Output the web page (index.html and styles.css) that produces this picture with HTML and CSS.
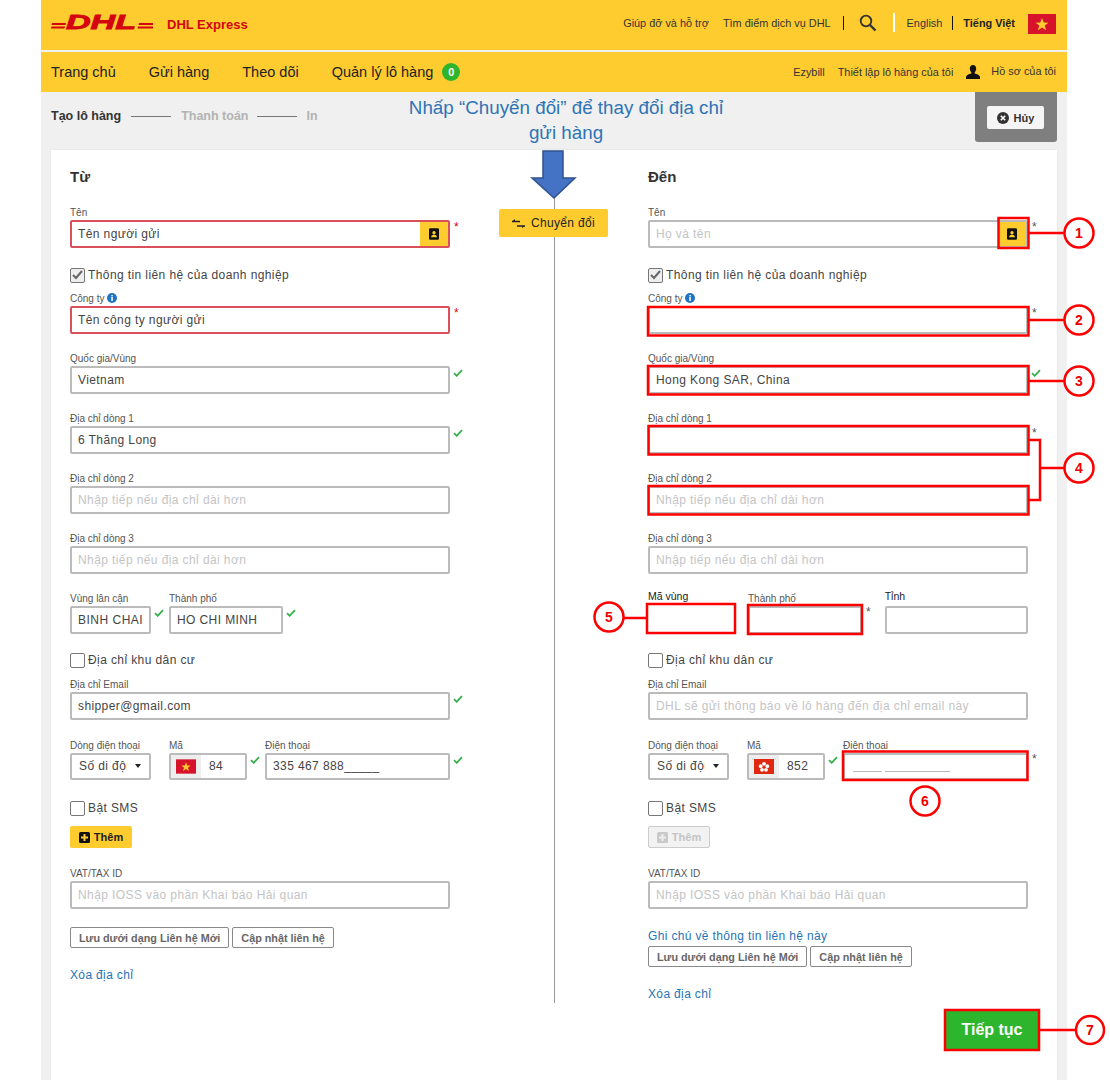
FILE: index.html
```html
<!DOCTYPE html>
<html lang="vi">
<head>
<meta charset="utf-8">
<title>DHL Express</title>
<link rel="stylesheet" href="styles.css">
</head>
<body>
<svg width="0" height="0" class="defs">
  <symbol id="vn" viewBox="0 0 28 20"><rect width="28" height="20" fill="#d6132a"/><polygon points="14,4 15.7,8.6 20.5,8.7 16.7,11.6 18.1,16.2 14,13.5 9.9,16.2 11.3,11.6 7.5,8.7 12.3,8.6" fill="#ffcc2f"/></symbol>
  <symbol id="book" viewBox="0 0 12 14"><path d="M1.5 0h9A1.5 1.5 0 0 1 12 1.5v11a1.5 1.5 0 0 1-1.500 1.500h-9A1.500 1.500 0 0 1 0 12.500v-11A1.500 1.500 0 0 1 1.500 0z" fill="#111"/><circle cx="6" cy="5.500" r="2" fill="#ffcc2f"/><path d="M2.500 11c0-2 1.500-3 3.500-3s3.500 1 3.500 3z" fill="#ffcc2f"/></symbol>
  <symbol id="check" viewBox="0 0 10 8"><path d="M1 4.200 3.700 6.800 9 1.200" fill="none" stroke="#35b04a" stroke-width="1.800"/></symbol>
</svg>
<div class="page">
  <header class="top">
    <div class="brand">
      <svg class="logo" width="102" height="18" viewBox="0 0 102 18">
        <g fill="#d40511">
          <polygon points="1,10 15,10 14.500,12 0.500,12"/><polygon points="0.500,13.500 14,13.500 13.500,15.500 0,15.500"/>
          <polygon points="88,10 102,10 102,12 87.500,12"/><polygon points="87,13.500 102,13.500 102,15.500 86.500,15.500"/>
        </g>
        <text x="15" y="16" class="logo-text" textLength="70" lengthAdjust="spacingAndGlyphs">DHL</text>
      </svg>
      <span class="product">DHL Express</span>
    </div>
    <nav class="util">
      <a class="util-gap">Giúp đỡ và hỗ trợ</a>
      <a>Tìm điểm dịch vụ DHL</a>
      <span class="pipe"></span>
      <svg class="search" width="18" height="18" viewBox="0 0 18 18"><circle cx="7" cy="7" r="5.300" fill="none" stroke="#333" stroke-width="1.800"/><path d="M11 11l5.500 5.500" stroke="#333" stroke-width="2.400"/></svg>
      <span class="white-bar"></span>
      <a>English</a>
      <span class="pipe pipe-lang"></span>
      <b>Tiếng Việt</b>
      <svg class="flag-top"><use href="#vn"/></svg>
    </nav>
  </header>
  <nav class="main-nav">
    <a class="nav-home">Trang chủ</a>
    <a class="nav-send">Gửi hàng</a>
    <a class="nav-track">Theo dõi</a>
    <a>Quản lý lô hàng</a>
    <span class="badge">0</span>
    <span class="nav-right">
      <a>Ezybill</a>
      <a>Thiết lập lô hàng của tôi</a>
      <svg class="user" width="14" height="14" viewBox="0 0 14 14"><path d="M7 0c2 0 3.200 1.500 3.200 3.600 0 1.500-.6 2.900-1.500 3.700v1.200c2 .6 5.300 1.300 5.300 4V14H0v-1.500c0-2.700 3.300-3.400 5.300-4V7.300C4.400 6.500 3.800 5.100 3.800 3.600 3.800 1.500 5 0 7 0z" fill="#111"/></svg>
      <a class="profile">Hồ sơ của tôi</a>
    </span>
  </nav>
  <div class="steps">
    <b class="step-on">Tạo lô hàng</b><i class="step-line"></i><b class="step-off">Thanh toán</b><i class="step-line"></i><b class="step-off">In</b>
    <div class="cancel-tab">
      <button class="cancel"><svg width="12" height="12" viewBox="0 0 12 12"><circle cx="6" cy="6" r="6" fill="#333"/><path d="M3.800 3.800l4.400 4.400M8.200 3.800 3.800 8.200" stroke="#fff" stroke-width="1.600"/></svg>Hủy</button>
    </div>
  </div>
  <main class="card">
    <section class="col">
      <h2>Từ</h2>
      <div class="field f-gap19"><label>Tên</label><div class="line">
        <div class="input err addon-wrap"><span>Tên người gửi</span><span class="addon"><svg width="10" height="12"><use href="#book"/></svg></span></div><em class="req red">*</em></div></div>
      <div class="tick f-gap9"><span class="box on"><svg width="11" height="10" viewBox="0 0 11 10"><path d="M1 5l3 3 6-7" fill="none" stroke="#666" stroke-width="2"/></svg></span>Thông tin liên hệ của doanh nghiệp</div>
      <div class="field"><label>Công ty <svg class="info" width="10" height="10" viewBox="0 0 10 10"><circle cx="5" cy="5" r="5" fill="#1f73c4"/><rect x="4.300" y="4" width="1.500" height="4" fill="#fff"/><rect x="4.300" y="2" width="1.500" height="1.400" fill="#fff"/></svg></label><div class="line">
        <div class="input err">Tên công ty người gửi</div><em class="req red">*</em></div></div>
      <div class="field"><label>Quốc gia/Vùng</label><div class="line"><div class="input">Vietnam</div><svg class="ok"><use href="#check"/></svg></div></div>
      <div class="field"><label>Địa chỉ dòng 1</label><div class="line"><div class="input">6 Thăng Long</div><svg class="ok"><use href="#check"/></svg></div></div>
      <div class="field"><label>Địa chỉ dòng 2</label><div class="line"><div class="input ph">Nhập tiếp nếu địa chỉ dài hơn</div></div></div>
      <div class="field"><label>Địa chỉ dòng 3</label><div class="line"><div class="input ph">Nhập tiếp nếu địa chỉ dài hơn</div></div></div>
      <div class="field row">
        <div class="cell w81"><label>Vùng lân cận</label><div class="input clip">BINH CHAI</div></div><svg class="ok cell-ok"><use href="#check"/></svg>
        <div class="cell w114"><label>Thành phố</label><div class="input">HO CHI MINH</div></div><svg class="ok cell-ok"><use href="#check"/></svg>
      </div>
      <div class="tick f-gap10"><span class="box"></span>Địa chỉ khu dân cư</div>
      <div class="field f-gap19"><label>Địa chỉ Email</label><div class="line"><div class="input">shipper@gmail.com</div><svg class="ok"><use href="#check"/></svg></div></div>
      <div class="field phone-row row">
        <div class="cell w81"><label>Dòng điện thoại</label><div class="input select"><span class="sel-text">Số di động</span><i class="caret"></i></div></div>
        <div class="cell w78 m18"><label>Mã</label><div class="input code"><span class="code-flag"><svg width="20" height="15"><use href="#vn"/></svg></span><span class="code-num">84</span></div></div><svg class="ok cell-ok"><use href="#check"/></svg>
        <div class="cell w185"><label>Điện thoại</label><div class="input">335 467 888_____</div></div><svg class="ok cell-ok"><use href="#check"/></svg>
      </div>
      <div class="tick f-gap10"><span class="box"></span>Bật SMS</div>
      <button class="add"><svg width="11" height="11" viewBox="0 0 11 11"><rect width="11" height="11" rx="1.500" fill="#111"/><path d="M5.500 2v7M2 5.500h7" stroke="#ffcc2f" stroke-width="2"/></svg>Thêm</button>
      <div class="field vat"><label>VAT/TAX ID</label><div class="line"><div class="input ph">Nhập IOSS vào phần Khai báo Hải quan</div></div></div>
      <div class="btns"><button class="ghost">Lưu dưới dạng Liên hệ Mới</button><button class="ghost">Cập nhật liên hệ</button></div>
      <a class="link del">Xóa địa chỉ</a>
    </section>

    <div class="mid">
      <i class="mid-line short"></i>
      <button class="swap"><svg width="13" height="9" viewBox="0 0 13 9"><path d="M0 2.500h8M5 7h8" stroke="#222" stroke-width="1.600"/><path d="M0 2.500 3 0v2.500zM13 7l-3 2V7z" fill="#222"/></svg>Chuyển đổi</button>
      <i class="mid-line long"></i>
    </div>

    <section class="col col-r">
      <h2>Đến</h2>
      <div class="field f-gap19"><label>Tên</label><div class="line">
        <div class="input addon-wrap ph"><span>Họ và tên</span><span class="addon"><svg width="10" height="12"><use href="#book"/></svg></span></div><em class="req">*</em></div></div>
      <div class="tick f-gap9"><span class="box on"><svg width="11" height="10" viewBox="0 0 11 10"><path d="M1 5l3 3 6-7" fill="none" stroke="#666" stroke-width="2"/></svg></span>Thông tin liên hệ của doanh nghiệp</div>
      <div class="field"><label>Công ty <svg class="info" width="10" height="10" viewBox="0 0 10 10"><circle cx="5" cy="5" r="5" fill="#1f73c4"/><rect x="4.300" y="4" width="1.500" height="4" fill="#fff"/><rect x="4.300" y="2" width="1.500" height="1.400" fill="#fff"/></svg></label><div class="line"><div class="input"></div><em class="req">*</em></div></div>
      <div class="field"><label>Quốc gia/Vùng</label><div class="line"><div class="input">Hong Kong SAR, China</div><svg class="ok"><use href="#check"/></svg></div></div>
      <div class="field"><label>Địa chỉ dòng 1</label><div class="line"><div class="input"></div><em class="req">*</em></div></div>
      <div class="field"><label>Địa chỉ dòng 2</label><div class="line"><div class="input ph">Nhập tiếp nếu địa chỉ dài hơn</div></div></div>
      <div class="field"><label>Địa chỉ dòng 3</label><div class="line"><div class="input ph">Nhập tiếp nếu địa chỉ dài hơn</div></div></div>
      <div class="field row">
        <div class="cell w88"><label class="dark">Mã vùng</label><div class="input blank"></div></div>
        <div class="cell w114 m12"><label>Thành phố</label><div class="input"></div></div><em class="req cell-req">*</em>
        <div class="cell w143 m-tinh"><label class="dark">Tỉnh</label><div class="input"></div></div>
      </div>
      <div class="tick f-gap10"><span class="box"></span>Địa chỉ khu dân cư</div>
      <div class="field f-gap19"><label>Địa chỉ Email</label><div class="line"><div class="input ph">DHL sẽ gửi thông báo về lô hàng đến địa chỉ email này</div></div></div>
      <div class="field phone-row row">
        <div class="cell w81"><label>Dòng điện thoại</label><div class="input select"><span class="sel-text">Số di động</span><i class="caret"></i></div></div>
        <div class="cell w78 m18"><label>Mã</label><div class="input code"><span class="code-flag"><svg width="20" height="15" viewBox="0 0 20 15"><rect width="20" height="15" fill="#de2910"/><g fill="#fff"><circle cx="10" cy="4.800" r="1.900"/><circle cx="13.300" cy="7.200" r="1.900"/><circle cx="12" cy="10.800" r="1.900"/><circle cx="8" cy="10.800" r="1.900"/><circle cx="6.700" cy="7.200" r="1.900"/></g></svg></span><span class="code-num">852</span></div></div><svg class="ok cell-ok"><use href="#check"/></svg>
        <div class="cell w185"><label>Điện thoại</label><div class="input mask"><i class="m1"></i><i class="m2"></i></div></div><em class="req cell-req">*</em>
      </div>
      <div class="tick f-gap10"><span class="box"></span>Bật SMS</div>
      <button class="add off"><svg width="11" height="11" viewBox="0 0 11 11"><rect width="11" height="11" rx="1.500" fill="#c9c9c9"/><path d="M5.500 2v7M2 5.500h7" stroke="#eee" stroke-width="2"/></svg>Thêm</button>
      <div class="field vat"><label>VAT/TAX ID</label><div class="line"><div class="input ph">Nhập IOSS vào phần Khai báo Hải quan</div></div></div>
      <a class="link note">Ghi chú về thông tin liên hệ này</a>
      <div class="btns"><button class="ghost">Lưu dưới dạng Liên hệ Mới</button><button class="ghost">Cập nhật liên hệ</button></div>
      <a class="link del">Xóa địa chỉ</a>
    </section>
    <button class="next">Tiếp tục</button>
  </main>

  <p class="hint">Nhấp “Chuyển đổi” để thay đổi địa chỉ<br>gửi hàng</p>
</div>

<svg class="marks" width="1110" height="1080" viewBox="0 0 1110 1080">
  <polygon points="543,151 563,151 563,178 575,178 554,198 532,178 543,178" fill="#4472c4" stroke="#2f528f" stroke-width="1.500"/>
  <g fill="none" stroke="#f00" stroke-width="2.500">
    <rect x="998.500" y="218" width="30" height="30"/>
    <rect x="648" y="307" width="380.500" height="28.500"/>
    <rect x="648" y="366" width="380.500" height="28.500"/>
    <rect x="648.500" y="426" width="380" height="28.500"/>
    <rect x="648.500" y="486" width="380" height="28.500"/>
    <rect x="647" y="604" width="88" height="29"/>
    <rect x="748" y="605" width="114" height="29"/>
    <rect x="843" y="751.500" width="184.500" height="28.500"/>
    <rect x="945" y="1010" width="94" height="40"/>
    <path d="M1029 233h35M1029 320h35M1029 381h35M1029 440h11v60h-11M1040 468h24M623 618h25M1040 1030h36"/>
    <circle cx="1079" cy="233" r="14.500" fill="#fff"/>
    <circle cx="1079" cy="320" r="14.500" fill="#fff"/>
    <circle cx="1079" cy="381" r="14.500" fill="#fff"/>
    <circle cx="1079" cy="468" r="14.500" fill="#fff"/>
    <circle cx="609" cy="617" r="14.500" fill="#fff"/>
    <circle cx="925" cy="801" r="14.500" fill="#fff"/>
    <circle cx="1090" cy="1030" r="14" fill="#fff"/>
  </g>
  <g class="num">
    <text x="1079" y="238">1</text><text x="1079" y="325">2</text><text x="1079" y="386">3</text><text x="1079" y="473">4</text>
    <text x="609" y="622">5</text><text x="925" y="806">6</text><text x="1090" y="1035">7</text>
  </g>
</svg>
</body>
</html>
```

FILE: styles.css
```css
* { box-sizing: border-box; }
html, body { margin: 0; height: 1080px; overflow: hidden; background: #fff; }
body { position: relative; font-family: "Liberation Sans", Arial, sans-serif; color: #333; }
.defs { position: absolute; }
.page { position: relative; margin-left: 41px; width: 1026px; height: 1080px; background: #f0f0f0; }
a { color: inherit; text-decoration: none; }

.top { height: 50px; background: #ffcc2f; display: flex; justify-content: space-between; align-items: center; padding: 0 11px 0 10px; }
.brand { display: flex; align-items: center; padding-bottom: 6px; }
.logo { overflow: visible; }
.logo-text { font: italic 700 21px "Liberation Sans", sans-serif; fill: #d40511; stroke: #d40511; stroke-width: .9px; }
.product { margin: 4px 0 0 14px; font-size: 13px; font-weight: 700; color: #d40511; }
.util { display: flex; align-items: center; font-size: 10.900px; color: #333; padding-bottom: 5px; }
.util-gap { margin-right: 14px; }
.pipe { width: 1px; height: 14px; background: #111; margin: 0 15px 0 12px; }
.search { margin-right: 16px; }
.white-bar { width: 2px; height: 19px; background: #fff; margin-right: 12px; }
.pipe-lang { margin: 0 10px; }
.util b { color: #222; }
.flag-top { width: 28px; height: 20px; margin: 2px 0 0 13px; }

.main-nav { margin-top: 2px; height: 40px; background: #ffcc2f; display: flex; align-items: center; padding: 0 11px 0 10px; font-size: 14.500px; color: #222; }
.nav-home { margin-right: 33px; }
.nav-send { margin-right: 33px; }
.nav-track { margin-right: 33px; }
.badge { margin-left: 9px; width: 18px; height: 18px; border-radius: 50%; background: #2db52d; color: #fff; font-size: 11px; font-weight: 700; display: flex; align-items: center; justify-content: center; }
.nav-right { margin-left: auto; display: flex; align-items: center; font-size: 10.900px; color: #333; gap: 13px; }
.user { margin-right: -2px; }
.profile { padding-bottom: 3px; }

.steps { height: 58px; display: flex; align-items: flex-start; padding: 0 10px; font-size: 12.500px; line-height: 14px; }
.steps b { margin-top: 17px; }
.step-on { color: #333; margin-right: 2px; }
.step-off { color: #b3b3b3; }
.step-line { width: 40px; height: 1px; background: #777; margin: 24px 10px 0 8px; }
.cancel-tab { margin-left: auto; width: 82px; height: 50px; background: #7f7f7f; border-radius: 0 0 3px 3px; padding: 14px 0 0 12px; }
.cancel { width: 57px; height: 23px; background: #f5f5f5; border: 0; border-radius: 2px; font: 700 11px "Liberation Sans", sans-serif; color: #333; display: flex; align-items: center; justify-content: center; gap: 5px; padding: 0; }

.card { position: relative; margin-left: 10px; width: 1006px; height: 930px; background: #fff; display: flex; padding: 18px 0 0 19px; box-shadow: 0 0 2px #ddd; }
.col { width: 420px; flex: none; display: flex; flex-direction: column; align-items: flex-start; }
.col-r { width: 409px; }
.col h2 { margin: 0 0 20px; font-size: 15px; line-height: 18px; font-weight: 700; color: #333; }
.mid { width: 109px; flex: none; margin: 30px 40px 0 9px; display: flex; flex-direction: column; align-items: center; }
.mid-line { width: 1px; background: #999; display: block; margin-left: 2px; }
.short { height: 11px; }
.long { height: 766px; }
.swap { width: 109px; height: 28px; flex: none; border: 0; border-radius: 2px; background: #ffcc2f; color: #222; font: 12px "Liberation Sans", sans-serif; letter-spacing: .35px; display: flex; align-items: center; justify-content: center; gap: 6px; padding: 0; }

.field { margin-bottom: 18px; width: 100%; }
.f-gap19 { margin-bottom: 19px; }
.f-gap9 { margin-bottom: 9px; }
.f-gap10 { margin-bottom: 10px; }
.field label, .cell label { display: block; height: 14px; font-size: 10px; line-height: 13px; color: #555; white-space: nowrap; }
.field label.dark { color: #222; font-size: 10.500px; line-height: 9px; }
.info { vertical-align: -1px; }
.line { display: flex; align-items: flex-start; }
.input { width: 380px; height: 28px; flex: none; border: 2px solid #bbb; border-radius: 2px; padding: 0 6px; font-size: 12px; line-height: 24px; letter-spacing: .4px; color: #444; white-space: nowrap; overflow: hidden; background: #fff; }
.phone-row { margin-bottom: 20px; }
.phone-row .input { height: 27px; line-height: 23px; }
.err { border-color: #d9505a; }
.ph { color: #c4c4c4; }
.addon-wrap { display: flex; justify-content: space-between; padding-right: 0; }
.addon { width: 28px; height: 24px; background: #ffcc2f; display: flex; align-items: center; justify-content: center; }
.req { margin-left: 4px; font-style: normal; font-size: 12px; line-height: 14px; color: #555; }
.red { color: #d40511; }
.ok { width: 10px; height: 8px; margin: 3px 0 0 3px; flex: none; }
.row { display: flex; align-items: flex-start; }
.cell .input { width: 100%; }
.w81 { width: 81px; }
.w88 { width: 88px; }
.w114 { width: 114px; }
.w78 { width: 78px; }
.w143 { width: 143px; }
.w185 { width: 185px; }
.m12 { margin-left: 12px; }
.m18 { margin-left: 18px; }
.m-tinh { margin-left: 14px; }
.cell-ok { margin: 17px 5px 0 3px; }
.cell-req { margin: 13px 0 0 4px; }
.clip { letter-spacing: .5px; }
.blank { border-color: transparent; }
.select { display: flex; align-items: center; padding: 0 0 0 7px; }
.sel-text { width: 48px; overflow: hidden; white-space: nowrap; }
.caret { width: 0; height: 0; margin: -2px 0 0 8px; border-left: 3px solid transparent; border-right: 3px solid transparent; border-top: 4px solid #222; }
.code { display: flex; padding: 0; }
.code-flag { width: 30px; background: #eee; flex: none; display: flex; align-items: center; justify-content: center; }
.code-num { margin-left: 8px; }
.mask { display: flex; align-items: flex-end; gap: 3px; padding: 0 0 6px 8px; }
.mask i { display: block; height: 1px; background: #bbb; }
.m1 { width: 29px; }
.m2 { width: 65px; }

.tick { display: flex; align-items: center; height: 16px; font-size: 12px; letter-spacing: .4px; color: #444; }
.box { width: 15px; height: 15px; border: 1px solid #777; border-radius: 2px; margin-right: 3px; background: #fff; display: flex; align-items: center; justify-content: center; }
.box.on { background: #eee; }
.add { width: 62px; height: 22px; flex: none; border: 0; border-radius: 2px; background: #ffcc2f; font: 700 11px "Liberation Sans", sans-serif; color: #222; display: flex; align-items: center; justify-content: center; gap: 4px; padding: 0; margin: 0 0 19px; }
.add.off { background: #f2f2f2; border: 1px solid #ccc; color: #c4c4c4; }
.vat { margin-bottom: 18px; }
.btns { display: flex; gap: 3px; }
.ghost { height: 21px; background: #fff; border: 1px solid #888; border-radius: 2px; font: 700 10.800px "Liberation Sans", sans-serif; color: #666; padding: 0 8px; }
.link { font-size: 12px; line-height: 14px; letter-spacing: .35px; color: #1f73b7; }
.del { margin-top: 20px; }
.note { margin: 2px 0 3px; }
.next { position: absolute; right: 19px; top: 861px; width: 92px; height: 38px; border: 0; background: #2db52d; color: #fff; font: 700 16px "Liberation Sans", sans-serif; }

.hint { position: absolute; left: 349px; top: 95px; width: 352px; margin: 0; text-align: center; font-size: 18.800px; line-height: 25px; color: #2e74b5; }
.marks { position: absolute; left: 0; top: 0; pointer-events: none; }
.num text { font: 700 14px "Liberation Sans", sans-serif; fill: #e00; text-anchor: middle; }
```
